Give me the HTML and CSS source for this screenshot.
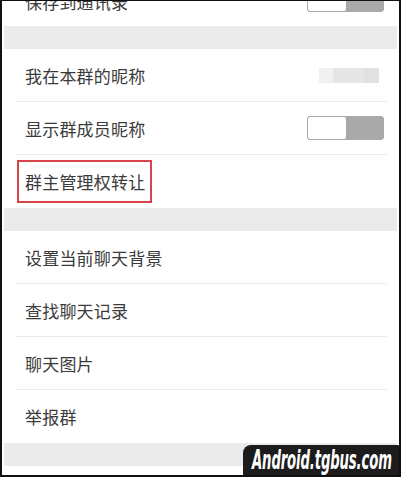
FILE: index.html
```html
<!DOCTYPE html>
<html lang="zh-CN">
<head>
<meta charset="UTF-8">
<meta name="viewport" content="width=device-width, initial-scale=1.0">
<title>群聊信息</title>
<link rel="stylesheet" href="styles.css">
</head>
<body>

<div class="frame">
    <div class="list cut">
        <div class="row">
            <span class="label low">保存到通讯录</span>
            <div class="switch"><span class="knob"></span></div>
        </div>
    </div>

    <div class="gap"></div>

    <div class="list">
        <div class="row">
            <span class="label">我在本群的昵称</span>
            <div class="blur">
                <span class="b1"></span><span class="b2"></span><span class="b3"></span>
            </div>
        </div>
        <div class="row">
            <span class="label">显示群成员昵称</span>
            <div class="switch"><span class="knob"></span></div>
        </div>
        <div class="row">
            <span class="label marked">群主管理权转让</span>
        </div>
    </div>

    <div class="gap"></div>

    <div class="list">
        <div class="row"><span class="label">设置当前聊天背景</span></div>
        <div class="row"><span class="label">查找聊天记录</span></div>
        <div class="row"><span class="label">聊天图片</span></div>
        <div class="row"><span class="label">举报群</span></div>
    </div>

    <div class="gap"></div>

    <div class="watermark"><span>Android.tgbus.com</span></div>
</div>

</body>
</html>
```

FILE: styles.css
```css
body {
    margin: 0;
    font-family: "Noto Sans CJK SC", "Noto Sans", sans-serif;
    background-color: #fff;
}

.frame {
    position: relative;
    box-sizing: border-box;
    height: 477px;
    overflow: hidden;
    background-color: #fff;
    border-style: solid;
    border-color: #111;
    border-width: 1px 2px 2px 2px;
    padding: 0 2px;
}

.list {
    background-color: #fff;
}

.list.cut {
    margin-top: -28px;
}

.row {
    display: flex;
    align-items: center;
    justify-content: space-between;
    height: 53px;
    margin: 0 10px 0 11px;
    padding: 0 3px 0 10px;
    border-bottom: 1px solid #ebebeb;
    box-sizing: border-box;
}

.row:last-child {
    border-bottom: none;
}

.label {
    font-size: 17px;
    color: #3b3b3b;
    letter-spacing: 0.2px;
}

.label.low {
    margin-top: 4px;
}

.marked {
    border: 2px solid #d9434a;
    padding: 7px 5px 7px 6px;
    margin-left: -8px;
}

.gap {
    height: 23px;
    background-color: #ebebeb;
}

.switch {
    display: flex;
    width: 77px;
    height: 24px;
    border-radius: 3px;
    background-color: #a9a9a9;
    overflow: hidden;
    box-sizing: border-box;
    border: 1px solid #a9a9a9;
}

.knob {
    width: 38px;
    height: 100%;
    background-color: #fff;
    border-radius: 2px;
}

.blur {
    display: flex;
    height: 15px;
    margin-right: 5px;
}

.blur span {
    display: block;
    height: 100%;
}

.b1 { width: 14px; background-color: #f1f1f1; }
.b2 { width: 31px; background-color: #e6e6e6; }
.b3 { width: 15px; background-color: #e1e1e1; }

.watermark {
    position: absolute;
    right: -6px;
    top: 444px;
    width: 162px;
    height: 40px;
    background-color: #1c1c1c;
    border-radius: 8px;
    overflow: hidden;
}

.watermark span {
    display: inline-block;
    color: #fff;
    font-family: "DejaVu Sans", sans-serif;
    font-weight: bold;
    font-style: italic;
    font-size: 26px;
    line-height: 31px;
    letter-spacing: -0.3px;
    margin-left: 9px;
    transform: scaleX(0.51);
    transform-origin: left center;
    white-space: nowrap;
}
```
